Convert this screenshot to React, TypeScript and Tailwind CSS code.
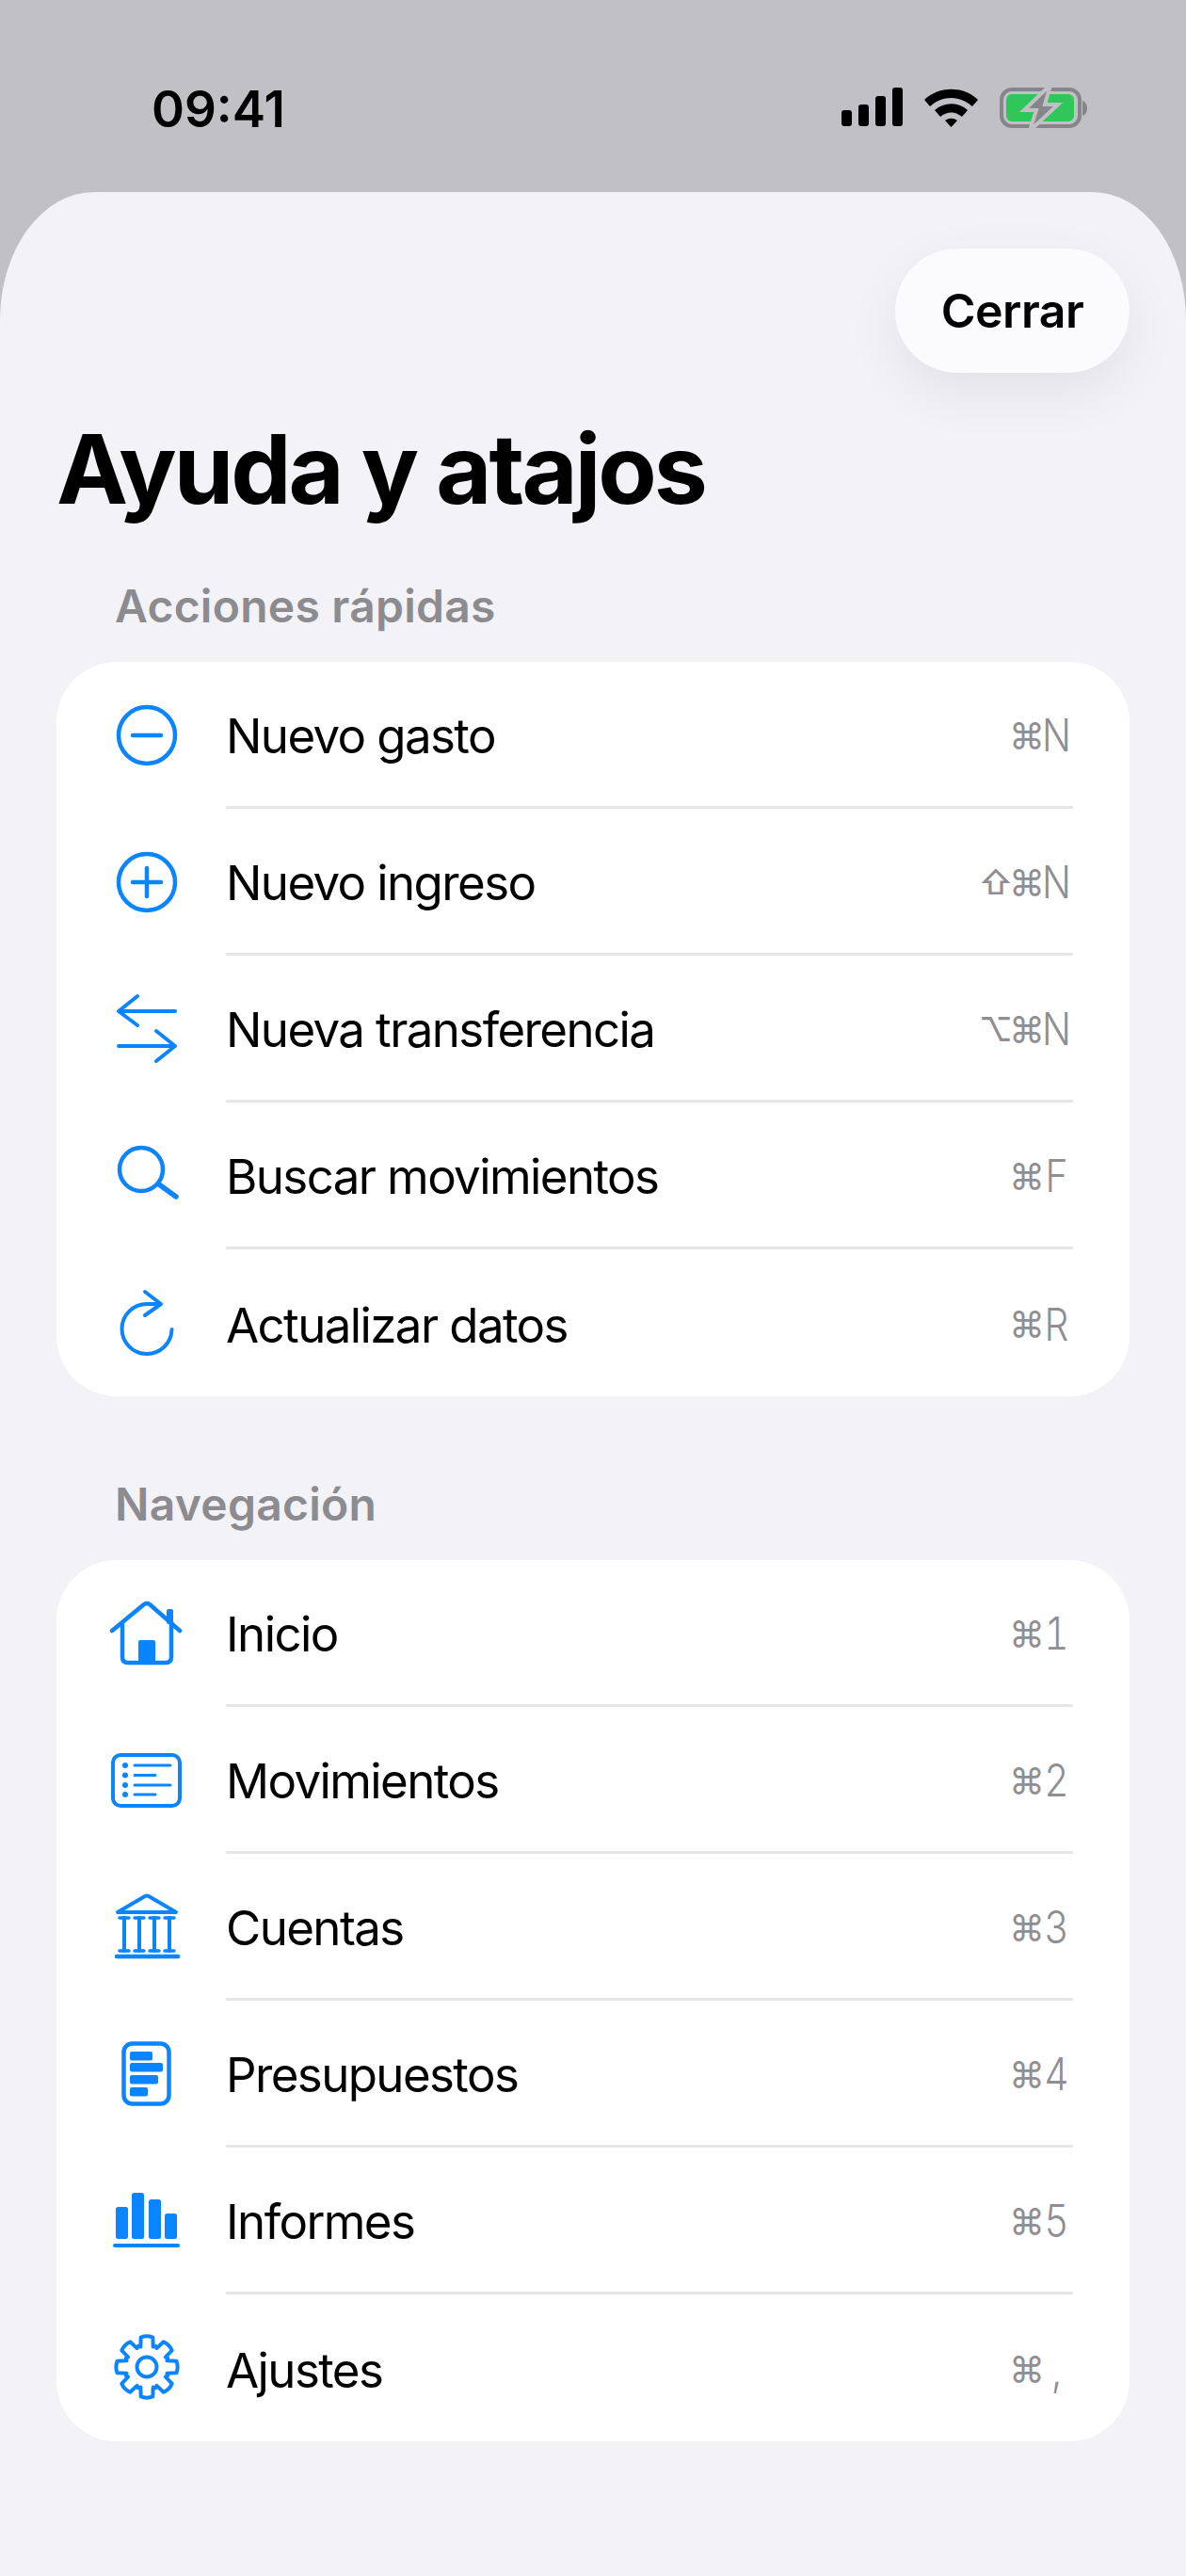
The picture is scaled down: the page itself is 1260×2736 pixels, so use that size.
import type { ReactNode } from 'react';

const BLUE = '#0a84ff';

function Icon({ children }: { children: ReactNode }) {
  return (
    <svg viewBox="0 0 80 80" className="w-[80px] h-[80px] shrink-0" fill="none" stroke={BLUE} strokeWidth={4.5} strokeLinecap="round" strokeLinejoin="round">
      {children}
    </svg>
  );
}

const MinusIcon = () => (
  <Icon>
    <circle cx="40" cy="40" r="30" />
    <path d="M25 40h30" />
  </Icon>
);

const PlusIcon = () => (
  <Icon>
    <circle cx="40" cy="40" r="30" />
    <path d="M25 40h30M40 25v30" />
  </Icon>
);

const TransferIcon = () => (
  <Icon>
    <g strokeWidth={4}>
      <path d="M10 21h60M30 5 10 21l20 15" />
      <path d="M10 58h60M50 42l20 16-20 16" />
    </g>
  </Icon>
);

const SearchIcon = () => (
  <Icon>
    <circle cx="34" cy="33" r="23" />
    <path d="m53 49 18 13" strokeWidth={5.5} />
  </Icon>
);

const RefreshIcon = () => (
  <Icon>
    <path d="M66.500 47a26.500 26.500 0 1 1-26.500-27h14" strokeWidth={4} />
    <path d="M38 7l17 13-17 12" strokeWidth={4} />
  </Icon>
);

const HomeIcon = () => (
  <Icon>
    <path d="M3 37 37 9q3-2 6 0l32 28" />
    <path d="M14 29v36q0 6 6 6h40q6 0 6-6V29" />
    <rect x="31" y="47" width="18" height="24" rx="2" fill={BLUE} stroke="none" />
    <rect x="61" y="14" width="7" height="16" rx="2" fill={BLUE} stroke="none" />
  </Icon>
);

const ListIcon = () => (
  <Icon>
    <rect x="4" y="13" width="71" height="54" rx="8" strokeWidth={4} />
    {[24, 34.5, 45, 55].map((y) => (
      <circle key={y} cx="17" cy={y} r="3" fill={BLUE} stroke="none" />
    ))}
    <path d="M27 24h38M27 34.500h22M27 45h38M27 55h22" strokeWidth={3} />
  </Icon>
);

const BankIcon = () => (
  <Icon>
    <path d="M9 24 38 7q2-1 4 0l29 17z" strokeWidth={4} />
    <path d="M16 30v35M32 30v35M48 30v35M64 30v35" strokeWidth={4} />
    <path d="M11 30h10M27 30h10M43 30h10M59 30h10M11 65h10M27 65h10M43 65h10M59 65h10" strokeWidth={3.5} />
    <path d="M8 71h65" />
  </Icon>
);

const BudgetIcon = () => (
  <Icon>
    <rect x="15.500" y="7.500" width="48" height="64" rx="9" />
    {[
      [16, 24],
      [28, 35],
      [41, 30],
      [54, 19],
    ].map(([y, w]) => (
      <rect key={y} x="22" y={y} width={w} height="9.500" rx="2" fill={BLUE} stroke="none" />
    ))}
  </Icon>
);

const ChartIcon = () => (
  <Icon>
    {[
      [7, 25],
      [24, 10],
      [42, 17],
      [59, 32],
    ].map(([x, y]) => (
      <rect key={x} x={x} y={y} width="13" height={59 - y} rx="2.500" fill={BLUE} stroke="none" />
    ))}
    <rect x="4" y="64" width="71" height="4" rx="2" fill={BLUE} stroke="none" />
  </Icon>
);

// 8 teeth, one of them pointing straight up
function gearPath() {
  const pts: string[] = [];
  for (let i = 0; i < 8; i++) {
    const a = (i * Math.PI) / 4 - Math.PI / 2;
    const at = (r: number, d: number) => `${(40 + r * Math.cos(a + d)).toFixed(2)} ${(39 + r * Math.sin(a + d)).toFixed(2)}`;
    pts.push(`${i === 0 ? 'M' : 'L'}${at(22.5, -0.3)}`, `L${at(32, -0.2)}`, `Q${at(34, 0)} ${at(32, 0.2)}`, `L${at(22.5, 0.3)}`);
    pts.push(`L${at(24, Math.PI / 8)}`);
  }
  return pts.join(' ') + ' Z';
}

const GearIcon = () => (
  <Icon>
    <path d={gearPath()} strokeWidth={4} />
    <circle cx="40" cy="39" r="10.500" strokeWidth={4} />
  </Icon>
);

const actions = [
  { icon: <MinusIcon />, label: 'Nuevo gasto', keys: '⌘N' },
  { icon: <PlusIcon />, label: 'Nuevo ingreso', keys: '⇧⌘N' },
  { icon: <TransferIcon />, label: 'Nueva transferencia', keys: '⌥⌘N' },
  { icon: <SearchIcon />, label: 'Buscar movimientos', keys: '⌘F' },
  { icon: <RefreshIcon />, label: 'Actualizar datos', keys: '⌘R' },
];

const navigation = [
  { icon: <HomeIcon />, label: 'Inicio', keys: '⌘1' },
  { icon: <ListIcon />, label: 'Movimientos', keys: '⌘2' },
  { icon: <BankIcon />, label: 'Cuentas', keys: '⌘3' },
  { icon: <BudgetIcon />, label: 'Presupuestos', keys: '⌘4' },
  { icon: <ChartIcon />, label: 'Informes', keys: '⌘5' },
  { icon: <GearIcon />, label: 'Ajustes', keys: '⌘,' },
];

function Keys({ keys }: { keys: string }) {
  const chars = Array.from(keys);
  const last = chars.pop();
  return (
    <span className="flex items-center mr-[2px] pt-[3px] text-[#8e8e93]">
      {chars.map((c) => (
        <span key={c} className={`flex justify-center ${c === '⌘' ? 'w-[32px] text-[38px]' : 'w-[34px] text-[35px] font-medium'}`}>{c}</span>
      ))}
      <span className="w-[31px] flex justify-center text-[48px] font-light tabular-nums scale-x-[0.85]">{last}</span>
    </span>
  );
}

function Section({ title, rows }: { title: string; rows: { icon: ReactNode; label: string; keys: string }[] }) {
  return (
    <section>
      <h2 className="pl-[122px] text-[48px] leading-[60px] font-semibold tracking-[0.25px] text-[#8b8b90]">{title}</h2>
      <div className="mt-[29px] mx-[60px] bg-white rounded-[64px] overflow-hidden">
        {rows.map((row, i) => (
          <div key={row.label} className="flex items-center h-[156px]">
            <div className="ml-[56px] mr-[44px] flex items-center">{row.icon}</div>
            <div className={`flex-1 h-full mr-[60px] flex items-center justify-between ${i < rows.length - 1 ? 'border-b-[3px] border-[#e6e6e8]' : ''}`}>
              <span className="pt-[6px] text-[51px] tracking-[-1.6px] text-black">{row.label}</span>
              <Keys keys={row.keys} />
            </div>
          </div>
        ))}
      </div>
    </section>
  );
}

export default function App() {
  return (
    <div className="w-[1260px] h-[2736px] bg-[#c1c0c5] font-['Inter','DejaVu_Sans',sans-serif] overflow-hidden">
      <header className="h-[204px] flex items-start justify-between pt-[85px] pl-[161px] pr-[104px]">
        <span className="text-[53px] leading-[62px] font-semibold text-black">09:41</span>
        <svg viewBox="0 0 262 44" className="w-[262px] h-[44px] mt-[8px]">
          <rect x="0" y="24" width="11" height="17" rx="3" />
          <rect x="18" y="18" width="11" height="23" rx="3" />
          <rect x="36" y="9" width="11" height="32" rx="3" />
          <rect x="54" y="0" width="11" height="41" rx="3" />
          <path d="M88 13C104-2 129-2 145 13l-6 7C126 8 107 8 94 20z" />
          <path d="M99 24c10-9 25-9 35 0l-6 7c-7-6-16-6-23 0z" />
          <path d="M110 35c4-3 9-3 13 0l-6.500 7z" />
          <rect x="170" y="2" width="83" height="39" rx="11" fill="none" stroke="#86868a" strokeWidth="4" />
          <rect x="175" y="7" width="72" height="29" rx="6" fill="#30c75a" />
          <path d="M256 14c3 1 5 4 5 8s-2 7-5 8z" fill="#86868a" />
          <path d="M222-3 194 24h13l-7 22 30-28h-14z" fill="#86868a" stroke="#c1c0c5" strokeWidth="4" />
        </svg>
      </header>
      <main className="h-[2532px] bg-[#f2f2f7] rounded-t-[100px_136px] pt-[60px]">
        <div className="flex justify-end pr-[60px]">
          <button className="w-[249px] h-[132px] rounded-[66px] bg-[#fbfbfe] text-[50px] font-semibold tracking-[-0.5px] text-black shadow-[0_20px_60px_rgba(0,0,0,0.07)]">Cerrar</button>
        </div>
        <h1 className="mt-[42px] pl-[60px] text-[102px] leading-[120px] font-bold text-black tracking-[-3px]">Ayuda y atajos</h1>
        <div className="mt-[56px]">
          <Section title="Acciones rápidas" rows={actions} />
        </div>
        <div className="mt-[85px]">
          <Section title="Navegación" rows={navigation} />
        </div>
      </main>
    </div>
  );
}
